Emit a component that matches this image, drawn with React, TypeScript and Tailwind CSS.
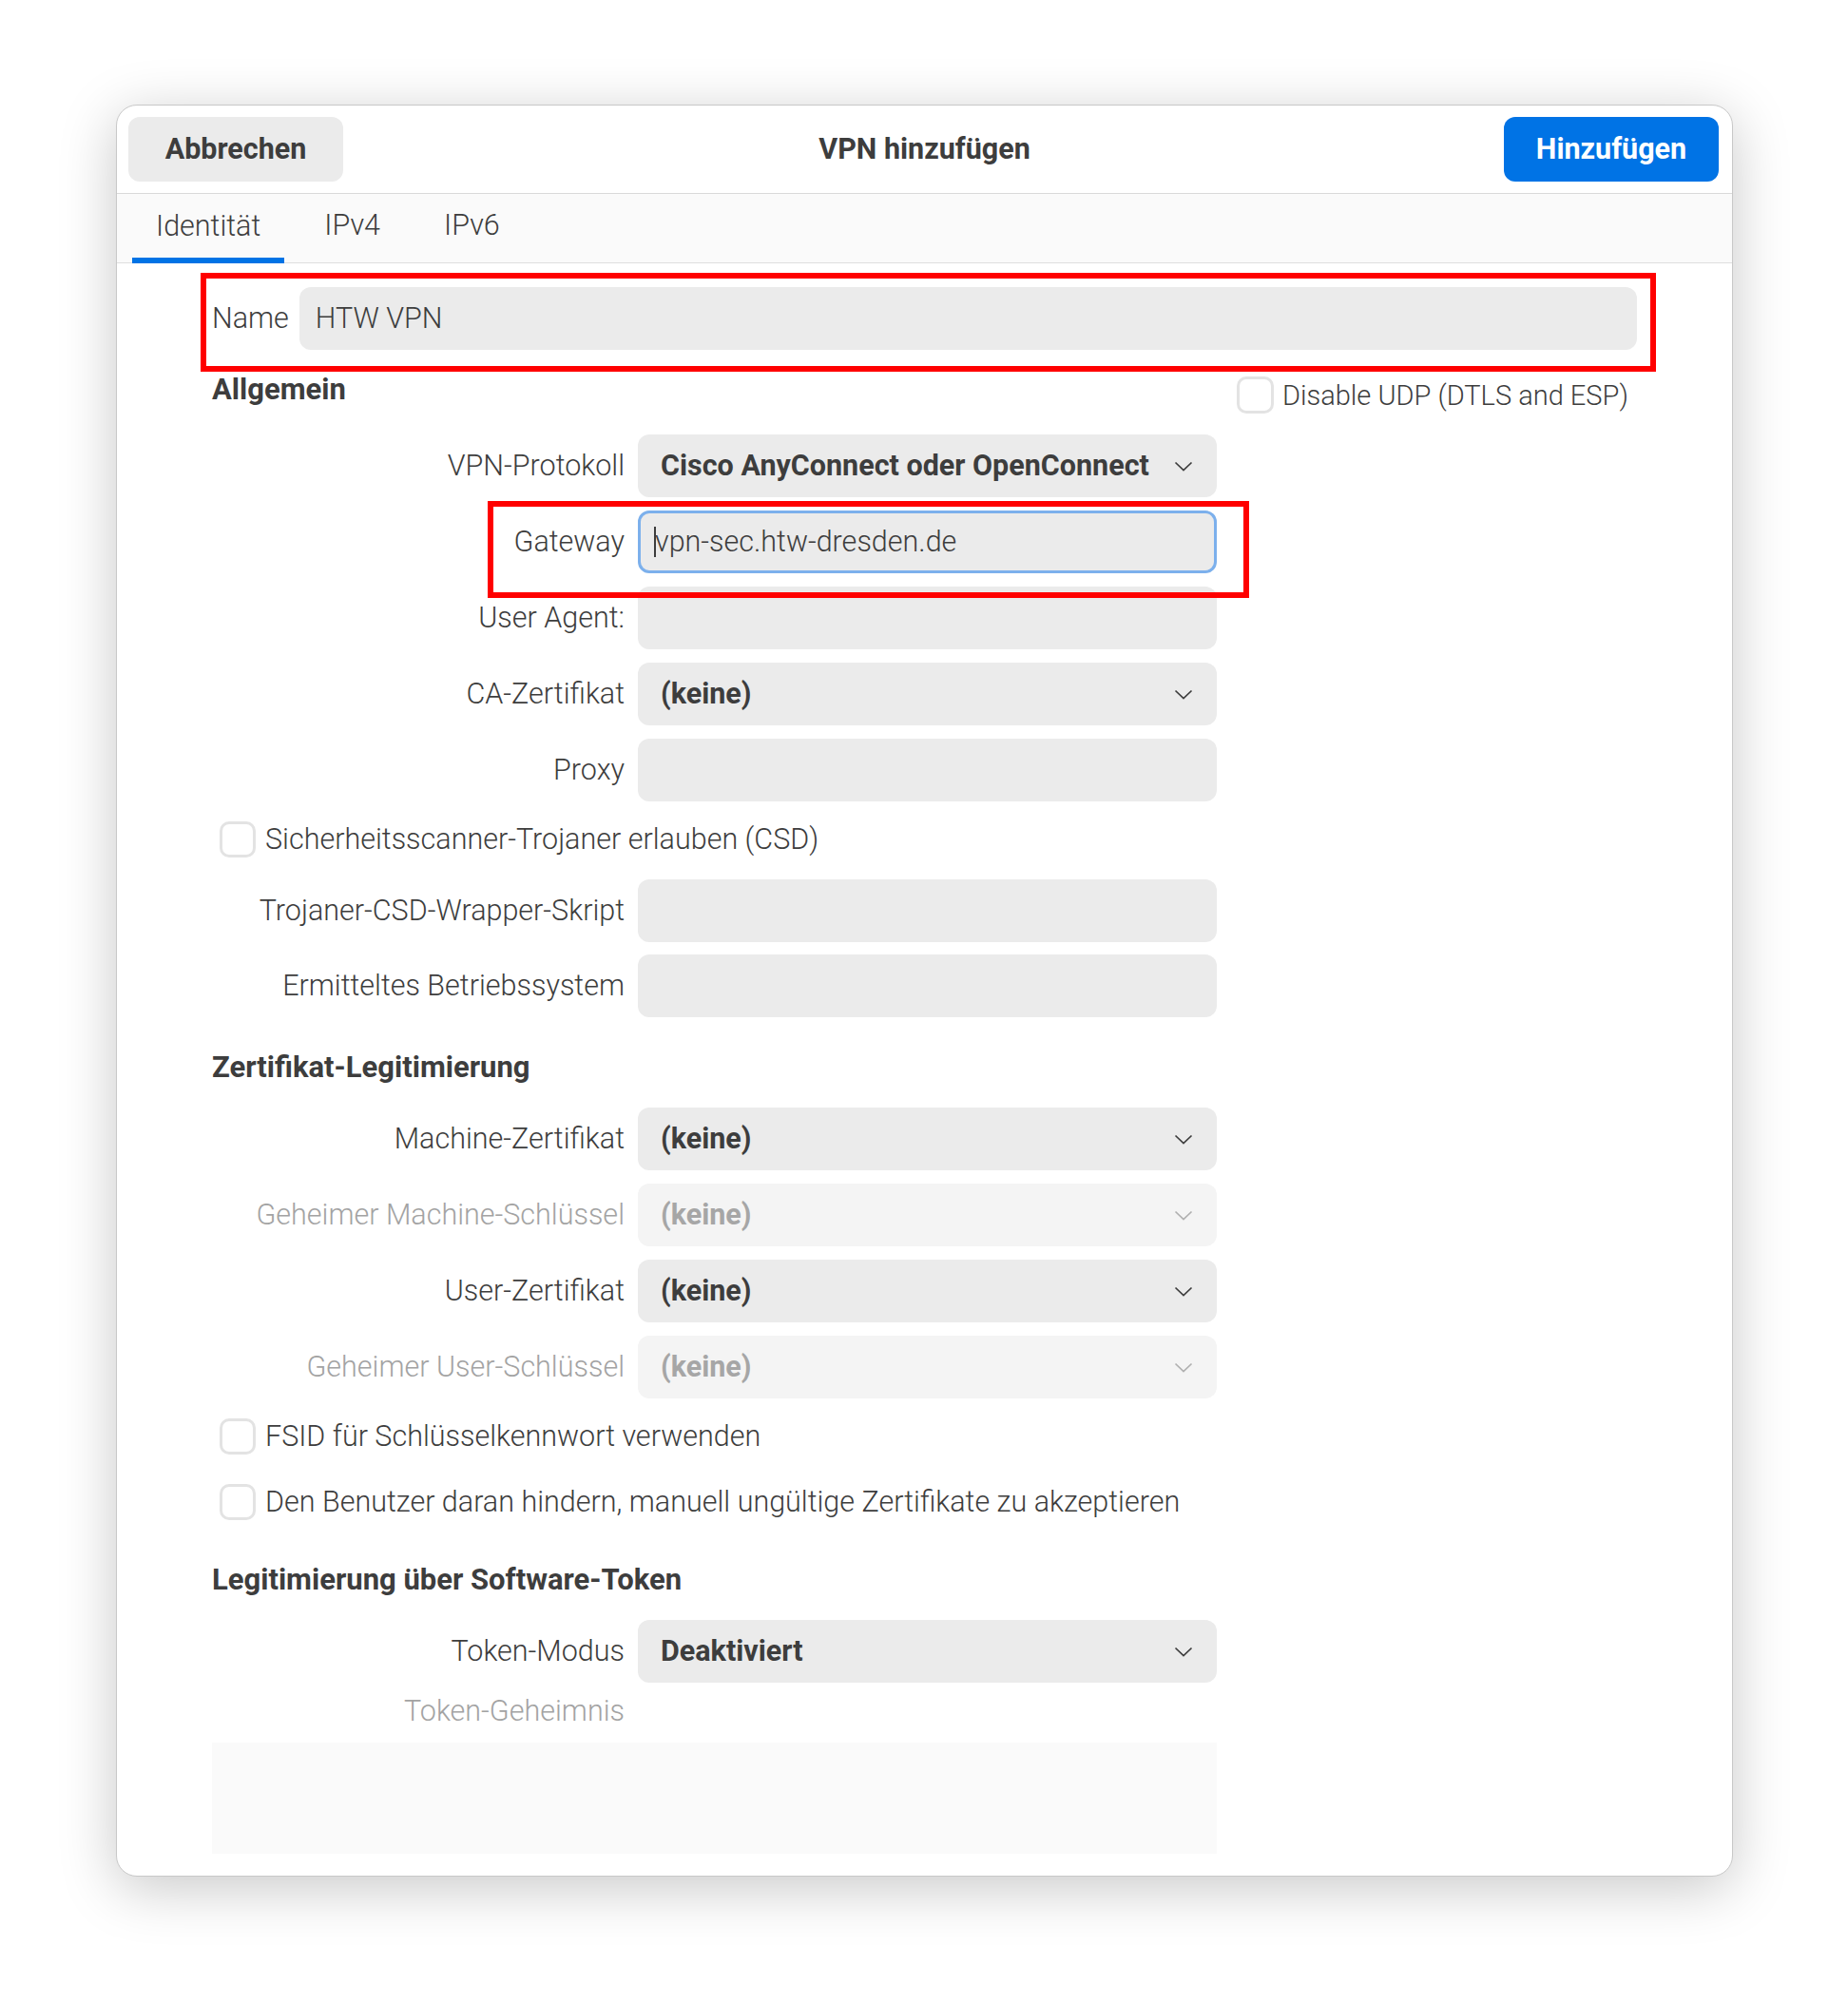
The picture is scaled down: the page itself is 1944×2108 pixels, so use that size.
import React from "react";

const txt = "text-[30.5px] leading-[36px] font-light text-[#3d3d3d]";

function Chevron({ muted }: { muted?: boolean }) {
  return (
    <svg width="20" height="11" viewBox="0 0 20 11" fill="none">
      <path d="M1.5 1.5L10 9.5l8.5-8" stroke={muted ? "#b0b0b0" : "#3d3d3d"} strokeWidth="1.7" />
    </svg>
  );
}

function Row({ label, muted, children }: { label: string; muted?: boolean; children?: React.ReactNode }) {
  return (
    <div className="grid grid-cols-[434px_609px] gap-x-[14px] items-center">
      <span className={"text-right text-[30.5px] leading-[36px] font-light " + (muted ? "text-[#a3a3a3]" : "text-[#3d3d3d]")}>
        {label}
      </span>
      {children}
    </div>
  );
}

function Entry() {
  return <div className="h-[66px] rounded-[12px] bg-[#ebebeb]" />;
}

function Dropdown({ value, muted }: { value: string; muted?: boolean }) {
  return (
    <div
      className={
        "h-[66px] rounded-[12px] flex items-center justify-between pl-[24px] pr-[25px] " +
        (muted ? "bg-[#f4f4f4]" : "bg-[#ebebeb]")
      }
    >
      <span className={"text-[30.5px] leading-[36px] font-bold " + (muted ? "text-[#a6a6a6]" : "text-[#3d3d3d]")}>{value}</span>
      <Chevron muted={muted} />
    </div>
  );
}

function Check({ text }: { text: string }) {
  return (
    <div className="flex items-center gap-[10px] pl-[8px]">
      <div className="w-[38px] h-[38px] rounded-[10px] border-[3px] border-[#e3e3e3] bg-white" />
      <span className={txt}>{text}</span>
    </div>
  );
}

function Heading({ text }: { text: string }) {
  return <div className="text-[31px] leading-[28px] font-bold text-[#3d3d3d]">{text}</div>;
}

export default function App() {
  return (
    <div className="min-h-[2108px] bg-white pt-[110px] pl-[122px] font-['Roboto',sans-serif]">
      <div className="w-[1701px] h-[1864px] bg-white rounded-[22px] border border-[#c8c8c8] shadow-[0_12px_60px_rgba(0,0,0,0.22)] overflow-hidden flex flex-col">
        {/* header bar */}
        <div className="h-[93px] shrink-0 grid grid-cols-[1fr_auto_1fr] items-center px-[12px] border-b border-[#d9d9d9]">
          <div>
            <button className="w-[226px] h-[68px] rounded-[12px] bg-[#ebebeb] text-[30.5px] font-bold text-[#3d3d3d]">
              Abbrechen
            </button>
          </div>
          <div className="text-[30.5px] font-bold text-[#3d3d3d]">VPN hinzufügen</div>
          <div className="flex justify-end pr-[2px]">
            <button className="w-[226px] h-[68px] rounded-[12px] bg-[#0073e5] text-[30.5px] font-bold text-white">
              Hinzufügen
            </button>
          </div>
        </div>

        {/* tabs */}
        <div className="h-[73px] shrink-0 bg-[#fafafa] border-b border-[#dedede] flex pl-[16px] gap-[17px]">
          <div className="px-[25px] flex items-center border-b-[6px] border-[#0073e5] mb-[-1px]">
            <span className={txt}>Identität</span>
          </div>
          <div className="px-[25px] flex items-center border-b-[6px] border-transparent">
            <span className={txt}>IPv4</span>
          </div>
          <div className="px-[25px] flex items-center border-b-[6px] border-transparent">
            <span className={txt}>IPv6</span>
          </div>
        </div>

        {/* content */}
        <div className="px-[100px] pt-[25px] flex flex-col">
          <div className="relative flex items-center gap-[11px]">
            <span className={txt}>Name</span>
            <div className="flex-1 h-[66px] rounded-[12px] bg-[#ebebeb] flex items-center pl-[17px]">
              <span className={txt}>HTW VPN</span>
            </div>
            <div className="absolute -left-[12px] -right-[20px] -top-[15px] -bottom-[23px] border-[6px] border-[#ff0000] pointer-events-none z-10" />
          </div>

          <div className="mt-[28px] h-[39px] grid grid-cols-[1078px_auto] items-start">
            <Heading text="Allgemein" />
            <div className="flex items-center gap-[9px] whitespace-nowrap">
              <div className="w-[39px] h-[39px] shrink-0 rounded-[10px] border-[3px] border-[#e3e3e3] bg-white" />
              <span className="text-[29px] leading-[36px] font-light text-[#3d3d3d]">Disable UDP (DTLS and ESP)</span>
            </div>
          </div>

          <div className="mt-[22px] flex flex-col gap-[14px]">
            <Row label="VPN-Protokoll">
              <Dropdown value="Cisco AnyConnect oder OpenConnect" />
            </Row>
            <div className="relative w-[1057px]">
              <Row label="Gateway">
                <div className="h-[66px] rounded-[12px] bg-[#ebebeb] border-[3px] border-[#7cb0ec] flex items-center pl-[14px]">
                  <span className="w-[2px] h-[32px] bg-[#3d3d3d] -mr-[1px]" />
                  <span className={txt}>vpn-sec.htw-dresden.de</span>
                </div>
              </Row>
              <div className="absolute left-[290px] -right-[34px] -top-[10px] -bottom-[26px] border-[6px] border-[#ff0000] pointer-events-none z-10" />
            </div>
            <Row label="User Agent:">
              <Entry />
            </Row>
            <Row label="CA-Zertifikat">
              <Dropdown value="(keine)" />
            </Row>
            <Row label="Proxy">
              <Entry />
            </Row>
          </div>

          <div className="mt-[21px]">
            <Check text="Sicherheitsscanner-Trojaner erlauben (CSD)" />
          </div>

          <div className="mt-[23px] flex flex-col gap-[13px]">
            <Row label="Trojaner-CSD-Wrapper-Skript">
              <Entry />
            </Row>
            <Row label="Ermitteltes Betriebssystem">
              <Entry />
            </Row>
          </div>

          <div className="mt-[39px]">
            <Heading text="Zertifikat-Legitimierung" />
          </div>

          <div className="mt-[28px] flex flex-col gap-[14px]">
            <Row label="Machine-Zertifikat">
              <Dropdown value="(keine)" />
            </Row>
            <Row label="Geheimer Machine-Schlüssel" muted>
              <Dropdown value="(keine)" muted />
            </Row>
            <Row label="User-Zertifikat">
              <Dropdown value="(keine)" />
            </Row>
            <Row label="Geheimer User-Schlüssel" muted>
              <Dropdown value="(keine)" muted />
            </Row>
          </div>

          <div className="mt-[21px]">
            <Check text="FSID für Schlüsselkennwort verwenden" />
          </div>
          <div className="mt-[31px]">
            <Check text="Den Benutzer daran hindern, manuell ungültige Zertifikate zu akzeptieren" />
          </div>

          <div className="mt-[49px]">
            <Heading text="Legitimierung über Software-Token" />
          </div>

          <div className="mt-[28px]">
            <Row label="Token-Modus">
              <Dropdown value="Deaktiviert" />
            </Row>
          </div>

          <div className="mt-[16px] w-[434px] text-right">
            <span className="text-[30.5px] leading-[28px] font-light text-[#a3a3a3]">Token-Geheimnis</span>
          </div>

          <div className="mt-[16px] w-[1057px] h-[117px] bg-[#fafafa]" />
        </div>
      </div>
    </div>
  );
}
